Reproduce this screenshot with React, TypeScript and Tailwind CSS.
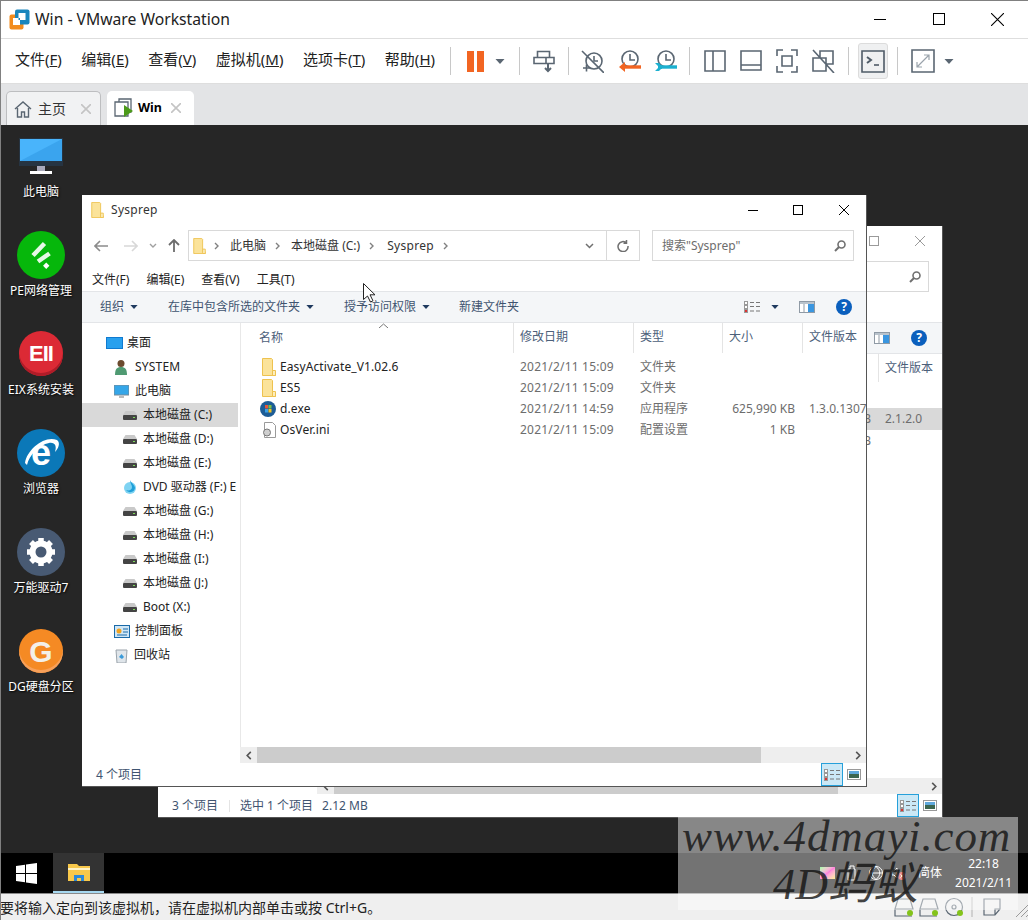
import React from "react";

const uiFont = "font-['Noto_Sans','Noto_Sans_CJK_SC',sans-serif]";

function Folder({ className = "" }: { className?: string }) {
  return (
    <svg viewBox="0 0 14 18" className={className}>
      <path d="M.5.5h9l1 1v14h3v2H.5z" fill="#fbe39a" stroke="#eec24f" />
      <path d="M10.5 12.5h3v5h-3z" fill="#fdeebc" stroke="#eec24f" />
    </svg>
  );
}

function Drive() {
  return (
    <svg viewBox="0 0 14 9" className="h-[9px] w-[14px]">
      <path d="M2.5 0h9L14 4H0z" fill="#c9c9c9" />
      <rect y="4" width="14" height="5" rx="1" fill="#444" />
      <rect x="10" y="6" width="2" height="1" fill="#7ddc5a" />
    </svg>
  );
}

function Caret({ className = "h-[5px] w-[9px]", color = "#1f3a5f" }: { className?: string; color?: string }) {
  return (
    <svg viewBox="0 0 9 5" className={className}>
      <path d="M0 0h9L4.5 5z" fill={color} />
    </svg>
  );
}

function Chevron({ className = "" }: { className?: string }) {
  return (
    <svg viewBox="0 0 5 8" className={`h-[8px] w-[5px] ${className}`} fill="none" stroke="#808080" strokeWidth="1.4">
      <path d="M1 1l3 3-3 3" />
    </svg>
  );
}

function Sep() {
  return <div className="h-[28px] w-px bg-[#c8c8c8]" />;
}

function ToolIcon({ children, w = 36 }: { children: React.ReactNode; w?: number }) {
  return (
    <div className="flex h-[24px] items-center justify-center" style={{ width: w }}>
      <svg viewBox="0 0 24 24" className="h-[24px] w-[24px]" fill="none" stroke="#5a6672" strokeWidth="1.6">
        {children}
      </svg>
    </div>
  );
}

function Menu({ label, k }: { label: string; k: string }) {
  return (
    <span className="whitespace-nowrap">
      {label}(<u>{k}</u>)
    </span>
  );
}

function TitleBar() {
  return (
    <div className="flex h-[38px] items-center bg-white pl-[9px]">
      <svg viewBox="0 0 21 21" className="h-[21px] w-[21px]">
        <rect x="0.5" y="5.5" width="14" height="15" rx="2" fill="#f28c1e" />
        <rect x="6" y="0.5" width="14.5" height="15" rx="2" fill="#1a86bd" />
        <rect x="4" y="9" width="7" height="7" fill="#fff" />
        <rect x="9.5" y="4" width="7" height="7" fill="#fff" />
        <rect x="9.5" y="9" width="1.5" height="2" fill="#1a86bd" />
      </svg>
      <span className="mt-[2px] ml-[5px] text-[15.7px] text-[#222]">Win - VMware Workstation</span>
      <div className="ml-auto flex items-center">
        <div className="h-px w-[12px] bg-black" />
        <div className="ml-[47px] h-[12px] w-[12px] border border-black" />
        <svg viewBox="0 0 12 12" className="ml-[46px] mr-[24px] h-[13px] w-[13px]" stroke="#000" fill="none">
          <path d="M0 0l12 12M12 0L0 12" />
        </svg>
      </div>
    </div>
  );
}

function Toolbar() {
  return (
    <div className="flex h-[46px] items-center border-y border-[#dedede] bg-white pl-[15px]">
      <div className="mb-[3px] flex w-[435px] gap-[19.5px] text-[15px] text-[#222]">
        <Menu label="文件" k="F" />
        <Menu label="编辑" k="E" />
        <Menu label="查看" k="V" />
        <Menu label="虚拟机" k="M" />
        <Menu label="选项卡" k="T" />
        <Menu label="帮助" k="H" />
      </div>
      <Sep />
      <div className="ml-[16px] flex h-[21px] gap-[3px]">
        <div className="w-[7px] bg-[#f26522]" />
        <div className="w-[7px] bg-[#f26522]" />
      </div>
      <Caret className="ml-[11px] h-[5px] w-[10px]" color="#5a6672" />
      <div className="ml-[14px]">
        <Sep />
      </div>
      <ToolIcon w={48}>
        <path d="M5.5 2.5h12v6h-12zM2 8.5h12v6H2zM14 8.5h8v6h-8z" />
        <path d="M16 14.5v7M13 19l3 3 3-3" strokeWidth="2" />
      </ToolIcon>
      <Sep />
      <ToolIcon w={46}>
        <circle cx="14" cy="12" r="8" />
        <path d="M14 7v5h4M3 19h7M6.5 15.5v7" />
        <path d="M2 2l22 22" />
      </ToolIcon>
      <div className="-ml-[4px]">
        <ToolIcon w={36}>
          <circle cx="13" cy="10" r="8" />
          <path d="M13 5v6h5" />
          <path d="M6 18h18" stroke="#f26522" strokeWidth="3.4" />
          <path d="M8 13l-6 5 6 5z" fill="#f26522" stroke="none" />
        </ToolIcon>
      </div>
      <ToolIcon w={36}>
        <circle cx="13" cy="10" r="8" />
        <path d="M13 5v6h5" />
        <path d="M6 18h18" stroke="#1cb0d0" strokeWidth="3.4" />
        <path d="M2 14h4l2 2h1v4H8l-2 2H2l3-3v-2z" fill="#1cb0d0" stroke="none" />
      </ToolIcon>
      <div className="ml-[6px]">
        <Sep />
      </div>
      <div className="ml-[7px] flex">
        <ToolIcon w={36}>
          <path d="M2 2h20v20H2zM10 2v20" />
        </ToolIcon>
        <ToolIcon w={36}>
          <path d="M2 2h20v19H2zM2 16h20" />
        </ToolIcon>
        <ToolIcon w={36}>
          <path d="M2 7V1h6M16 1h6v6M22 17v6h-6M8 23H2v-6M7 7h10v10H7z" />
        </ToolIcon>
        <ToolIcon w={36}>
          <path d="M9 9V2h13v13h-7M2 9h13v13H2zM2 1l21 23" />
        </ToolIcon>
      </div>
      <div className="ml-[7px]">
        <Sep />
      </div>
      <div className="ml-[9px] flex h-[36px] w-[30px] items-center justify-center rounded-[3px] border border-[#dcdcdc] bg-[#eff0f1]">
        <svg viewBox="0 0 24 24" className="h-[24px] w-[24px]" fill="none" stroke="#4f5b67" strokeWidth="1.6">
          <path d="M1 2h22v21H1z" />
          <path d="M6 8l4 3-4 3" strokeWidth="2" />
          <path d="M13 16h5" />
        </svg>
      </div>
      <div className="ml-[9px]">
        <Sep />
      </div>
      <div className="ml-[13px]">
        <svg viewBox="0 0 24 24" className="h-[24px] w-[24px]" fill="none" stroke="#5a6672" strokeWidth="1.6">
          <path d="M1 1h22v22H1z" />
          <path d="M6 18L18 6M13 6h5v5M6 13v5h5" stroke="#9aa3ab" strokeWidth="1.2" />
        </svg>
      </div>
      <Caret className="ml-[9px] h-[5px] w-[10px]" color="#5a6672" />
    </div>
  );
}

function Tabs() {
  return (
    <div className="flex h-[41px] items-end gap-[6px] bg-[#e3e4e6] pl-[6px]">
      <div className="flex h-[34px] w-[95px] items-center rounded-t-[5px] border border-b-0 border-[#bdbec0] bg-[#f1f2f3] pl-[7px]">
        <svg viewBox="0 0 18 18" className="h-[18px] w-[18px]" fill="none" stroke="#5a6672" strokeWidth="1.4">
          <path d="M1 9l8-7 8 7M3.5 8v9h4v-5h3v5h4V8" />
        </svg>
        <span className="ml-[6px] text-[14px] text-[#333]">主页</span>
        <svg viewBox="0 0 10 10" className="ml-[15px] h-[10px] w-[10px]" stroke="#c4c4c4" strokeWidth="1.6">
          <path d="M0 0l10 10M10 0L0 10" />
        </svg>
      </div>
      <div className="flex h-[34px] w-[87px] items-center rounded-t-[5px] bg-white pl-[7px]">
        <svg viewBox="0 0 20 20" className="h-[20px] w-[20px]">
          <path d="M5 3.5V1h12v13h-2M1 4h13v14H1z" fill="none" stroke="#5a6672" strokeWidth="1.3" />
          <path d="M10 7v12l9-6z" fill="#4c9a1a" />
        </svg>
        <span className="ml-[4px] text-[12.5px] font-bold text-black">Win</span>
        <svg viewBox="0 0 10 10" className="ml-[9px] h-[10px] w-[10px]" stroke="#c4c4c4" strokeWidth="1.6">
          <path d="M0 0l10 10M10 0L0 10" />
        </svg>
      </div>
    </div>
  );
}

const desktopItems = [
  {
    label: "此电脑",
    icon: (
      <svg viewBox="0 0 46 40" className="mt-[4px] h-[40px] w-[46px]">
        <rect x="1" y="0" width="44" height="28" fill="#263442" />
        <rect x="2" y="1" width="42" height="22" fill="#49b4fb" />
        <path d="M2 23L44 1v22z" fill="#3aa4ee" />
        <rect x="19" y="28" width="8" height="6" fill="#aab" />
        <rect x="12" y="33" width="22" height="3" fill="#fff" />
      </svg>
    ),
  },
  {
    label: "PE网络管理",
    icon: (
      <svg viewBox="0 0 48 48" className="h-[48px] w-[48px]">
        <circle cx="24" cy="24" r="24" fill="#06b70b" />
        <path d="M16 24.5L27.5 12.5M21 30.5l11.5-8" stroke="#e6f8e6" strokeWidth="4.5" fill="none" />
        <rect x="27" y="32.5" width="4.5" height="4.5" transform="rotate(45 29.3 34.7)" fill="#fff" />
      </svg>
    ),
  },
  {
    label: "EIX系统安装",
    icon: (
      <div className="mb-[2px] flex h-[45px] w-[44px] items-center justify-center rounded-full bg-[#dc2a35] font-['Liberation_Sans',sans-serif] text-[22px] font-bold tracking-[-1px] text-white shadow-[inset_0_-3px_0_#b01c28]">
        EII
      </div>
    ),
  },
  {
    label: "浏览器",
    icon: (
      <svg viewBox="0 0 48 48" className="h-[48px] w-[48px]">
        <circle cx="24" cy="24" r="24" fill="#0b78b8" />
        <text x="24" y="36" textAnchor="middle" fontSize="36" fontWeight="700" fontFamily="Liberation Sans" fill="#fff">e</text>
        <path d="M8 34C10 20 28 6 40 11 44 14 41 20 38 23 40 17 38 13 32 14 22 16 12 26 10 36z" fill="#fff" />
      </svg>
    ),
  },
  {
    label: "万能驱动7",
    icon: (
      <div className="flex h-[48px] w-[48px] items-center justify-center rounded-full bg-[#485a73]">
        <svg viewBox="0 0 32 32" className="h-[32px] w-[32px]">
          <circle cx="16" cy="16" r="8.5" fill="none" stroke="#fff" strokeWidth="6" />
          <path d="M16 2v6M16 24v6M2 16h6M24 16h6M6 6l4 4M22 22l4 4M26 6l-4 4M10 22l-4 4" stroke="#fff" strokeWidth="5.5" />
        </svg>
      </div>
    ),
  },
  {
    label: "DG硬盘分区",
    icon: (
      <div className="flex h-[44px] w-[44px] items-center justify-center rounded-full bg-[#f58a24] font-['Liberation_Sans',sans-serif] text-[30px] font-bold text-[#f3f0ea] shadow-[inset_0_-3px_0_#f7a05a]">
        G
      </div>
    ),
  },
];

function DesktopIcons() {
  return (
    <div className="flex w-[82px] flex-col items-center pt-[7px]">
      {desktopItems.map((d) => (
        <div key={d.label} className="flex h-[99px] w-[82px] flex-col items-center">
          <div className="flex h-[48px] items-center">{d.icon}</div>
          <div className="mt-[3px] text-[12px] whitespace-nowrap text-white [text-shadow:1px_1px_2px_#000]">
            {d.label}
          </div>
        </div>
      ))}
    </div>
  );
}

const treeItems = [
  { t: "本地磁盘 (C:)", sel: true },
  { t: "本地磁盘 (D:)" },
  { t: "本地磁盘 (E:)" },
  { t: "DVD 驱动器 (F:) E", dvd: true },
  { t: "本地磁盘 (G:)" },
  { t: "本地磁盘 (H:)" },
  { t: "本地磁盘 (I:)" },
  { t: "本地磁盘 (J:)" },
  { t: "Boot (X:)" },
];

function NavPane() {
  return (
    <div className="flex w-[158px] flex-col overflow-hidden pt-[8px] text-[12px] text-[#222]">
      <div className="flex h-[24px] items-center pl-[24px]">
        <div className="h-[12px] w-[17px] border border-[#0f7ad0] bg-[#28a0ee]" />
        <span className="ml-[4px]">桌面</span>
      </div>
      <div className="flex h-[24px] items-center pl-[33px]">
        <svg viewBox="0 0 12 16" className="h-[16px] w-[12px]">
          <circle cx="6" cy="4.5" r="3.5" fill="#6b4a2e" />
          <path d="M0 16c0-6 2-8 6-8s6 2 6 8z" fill="#4f9a72" />
        </svg>
        <span className="ml-[8px] tracking-[0.2px]">SYSTEM</span>
      </div>
      <div className="flex h-[24px] items-center pl-[32px]">
        <svg viewBox="0 0 15 13" className="h-[13px] w-[15px]">
          <rect width="15" height="10" fill="#35a6e8" stroke="#7b8a96" />
          <rect x="5" y="11" width="5" height="2" fill="#bbb" />
        </svg>
        <span className="ml-[6px]">此电脑</span>
      </div>
      {treeItems.map((d) => (
        <div
          key={d.t}
          className={`flex h-[24px] w-[156px] items-center pl-[41px] whitespace-nowrap ${d.sel ? "bg-[#d9d9d9]" : ""}`}
        >
          {d.dvd ? (
            <svg viewBox="0 0 14 14" className="h-[14px] w-[14px]">
              <circle cx="7" cy="8" r="6" fill="#7fd3f2" />
              <path d="M7 0c1 3 5 5 5 8a5 5 0 0 1-9 2c3 1 6 0 6-3 0-2-2-4-2-7z" fill="#1f9fd8" />
            </svg>
          ) : (
            <Drive />
          )}
          <span className="ml-[6px]">{d.t}</span>
        </div>
      ))}
      <div className="flex h-[24px] items-center pl-[32px]">
        <svg viewBox="0 0 16 13" className="h-[13px] w-[16px]">
          <rect x="0.5" y="0.5" width="15" height="12" fill="#cfe6f6" stroke="#1a6aa8" />
          <circle cx="5" cy="6" r="2.5" fill="#f2a31f" />
          <path d="M9 4h5M9 7h5M3 10h10" stroke="#1a6aa8" />
        </svg>
        <span className="ml-[5px]">控制面板</span>
      </div>
      <div className="flex h-[24px] items-center pl-[33px]">
        <svg viewBox="0 0 13 15" className="h-[15px] w-[13px]">
          <path d="M1 2h11l-1 13H2z" fill="#dfe5ea" stroke="#9aa3ab" />
          <path d="M4 9l2.5-3L9 9l-2 2z" fill="#3a9ad9" />
        </svg>
        <span className="ml-[6px]">回收站</span>
      </div>
    </div>
  );
}

const files = [
  { name: "EasyActivate_V1.02.6", date: "2021/2/11 15:09", type: "文件夹", size: "", ver: "", icon: "folder" },
  { name: "ES5", date: "2021/2/11 15:09", type: "文件夹", size: "", ver: "", icon: "folder" },
  { name: "d.exe", date: "2021/2/11 14:59", type: "应用程序", size: "625,990 KB", ver: "1.3.0.1307", icon: "exe" },
  { name: "OsVer.ini", date: "2021/2/11 15:09", type: "配置设置", size: "1 KB", ver: "", icon: "ini" },
];

function FileIcon({ kind }: { kind: string }) {
  if (kind === "folder") return <Folder className="h-[18px] w-[14px]" />;
  if (kind === "exe")
    return (
      <svg viewBox="0 0 16 16" className="h-[16px] w-[16px]">
        <circle cx="8" cy="8" r="8" fill="#1d5c96" />
        <rect x="5" y="4" width="3" height="3.5" fill="#e8553a" />
        <rect x="8.5" y="4" width="3" height="3.5" fill="#7cc043" />
        <rect x="5" y="8" width="3" height="3.5" fill="#39a0e6" />
        <rect x="8.5" y="8" width="3" height="3.5" fill="#f4c321" />
      </svg>
    );
  return (
    <svg viewBox="0 0 14 16" className="h-[16px] w-[14px]">
      <path d="M2.5.5h8l3 3v12h-11z" fill="#fff" stroke="#9a9a9a" />
      <circle cx="5" cy="10.5" r="3.5" fill="#cfcfcf" stroke="#777" />
    </svg>
  );
}

const gridCols = "grid-cols-[272px_120px_89px_80px_64px]";

function FilePane() {
  return (
    <div className="flex min-w-0 flex-1 flex-col overflow-hidden border-l border-[#e8e8e8] text-[12px]">
      <div className={`relative grid h-[30px] ${gridCols} items-center text-[#4c607a]`}>
        <div className="pl-[18px]">名称</div>
        <div className="h-full border-l border-[#e4e4e4] pl-[6px] leading-[28px]">修改日期</div>
        <div className="h-full border-l border-[#e4e4e4] pl-[6px] leading-[28px]">类型</div>
        <div className="h-full border-l border-[#e4e4e4] pl-[6px] leading-[28px]">大小</div>
        <div className="h-full border-l border-[#e4e4e4] pl-[6px] leading-[28px] whitespace-nowrap">文件版本</div>
        <svg viewBox="0 0 9 5" className="absolute top-0 left-[138px] h-[5px] w-[9px]" fill="none" stroke="#777">
          <path d="M0 5l4.5-4L9 5" />
        </svg>
      </div>
      <div className="flex-1 pt-[3px]">
        {files.map((f) => (
          <div key={f.name} className={`grid h-[21px] ${gridCols} items-center whitespace-nowrap text-[#6d6d6d]`}>
            <div className="flex items-center text-[#222]">
              <div className="flex w-[39px] justify-end pr-[4px]">
                <FileIcon kind={f.icon} />
              </div>
              <span className="tracking-[0.1px]">{f.name}</span>
            </div>
            <div className="pl-[7px] tracking-[0.2px]">{f.date}</div>
            <div className="pl-[7px]">{f.type}</div>
            <div className="pr-[7px] text-right">{f.size}</div>
            <div className="overflow-hidden pl-[7px]">{f.ver}</div>
          </div>
        ))}
      </div>
    </div>
  );
}

function ScrollBar({ thumb, className = "" }: { thumb: number; className?: string }) {
  return (
    <div className={`flex h-[16px] items-center bg-[#eeeeee] ${className}`}>
      <div className="flex w-[17px] justify-center text-[#555]">
        <svg viewBox="0 0 6 10" className="h-[9px] w-[6px]" fill="none" stroke="#555" strokeWidth="1.8">
          <path d="M5 1L1 5l4 4" />
        </svg>
      </div>
      <div className="h-full bg-[#cccccc]" style={{ width: thumb }} />
      <div className="ml-auto flex w-[17px] justify-center">
        <svg viewBox="0 0 6 10" className="h-[9px] w-[6px]" fill="none" stroke="#555" strokeWidth="1.8">
          <path d="M1 1l4 4-4 4" />
        </svg>
      </div>
    </div>
  );
}

function ViewButtons() {
  return (
    <div className="ml-auto flex h-full items-center pr-[5px]">
      <div className="flex h-full w-[22px] items-center justify-center border border-[#26a0da] bg-[#cbe8f6]">
        <svg viewBox="0 0 17 12" className="h-[12px] w-[17px]">
          <path d="M0 0h4v12H0z" fill="#999" />
          <path d="M1 1h2v2H1zM1 5h2v2H1z" fill="#fff" />
          <path d="M1 9h2v2H1z" fill="#d33" />
          <path d="M6 1.5h4M12 1.5h4M6 5.5h4M12 5.5h4M6 10h4M12 10h4" stroke="#777" />
        </svg>
      </div>
      <svg viewBox="0 0 14 11" className="ml-[4px] h-[11px] w-[14px]">
        <rect x="0.5" y="0.5" width="13" height="10" fill="#fff" stroke="#999" />
        <rect x="2" y="2" width="10" height="3" fill="#5fa8dc" />
        <rect x="2" y="5" width="10" height="4" fill="#3c6650" />
      </svg>
    </div>
  );
}

function FrontWindow() {
  return (
    <div className="absolute top-[70px] left-[82px] flex h-[592px] w-[785px] flex-col border-r border-b border-[#555] bg-white">
      {/* title */}
      <div className="flex h-[35px] items-center pb-[5px] pl-[9px]">
        <Folder className="h-[16px] w-[13px]" />
        <span className="ml-[7px] text-[12px] tracking-[0.3px] text-[#333]">Sysprep</span>
        <div className="ml-auto flex items-center pr-[17px]">
          <div className="h-px w-[10px] bg-black" />
          <div className="ml-[35px] h-[10px] w-[10px] border border-black" />
          <svg viewBox="0 0 10 10" className="ml-[36px] h-[10px] w-[10px]" stroke="#000" fill="none">
            <path d="M0 0l10 10M10 0L0 10" />
          </svg>
        </div>
      </div>
      {/* nav row */}
      <div className="flex h-[31px] items-center pl-[12px] text-[12px]">
        <svg viewBox="0 0 14 12" className="h-[12px] w-[14px]" fill="none" stroke="#8c8c8c" strokeWidth="1.6">
          <path d="M14 6H1M6 1L1 6l5 5" />
        </svg>
        <svg viewBox="0 0 14 12" className="ml-[16px] h-[12px] w-[14px]" fill="none" stroke="#d8d8d8" strokeWidth="1.6">
          <path d="M0 6h13M8 1l5 5-5 5" />
        </svg>
        <svg viewBox="0 0 8 5" className="ml-[11px] h-[5px] w-[8px]" fill="none" stroke="#a0a0a0" strokeWidth="1.4">
          <path d="M1 1l3 3 3-3" />
        </svg>
        <svg viewBox="0 0 12 13" className="ml-[11px] h-[13px] w-[12px]" fill="none" stroke="#6d6d6d" strokeWidth="1.8">
          <path d="M6 13V1M1 6l5-5 5 5" />
        </svg>
        <div className="ml-[8px] flex h-[31px] w-[452px] items-center border border-[#d9d9d9] pl-[4px] text-[#333]">
          <Folder className="h-[16px] w-[13px]" />
          <Chevron className="ml-[8px]" />
          <span className="ml-[11px]">此电脑</span>
          <Chevron className="ml-[9px]" />
          <span className="ml-[11px]">本地磁盘 (C:)</span>
          <Chevron className="ml-[9px]" />
          <span className="ml-[13px] tracking-[0.3px]">Sysprep</span>
          <Chevron className="ml-[9px]" />
          <div className="ml-auto flex h-full items-center">
            <svg viewBox="0 0 9 6" className="mr-[12px] h-[6px] w-[9px]" fill="none" stroke="#707070" strokeWidth="1.5">
              <path d="M1 1l3.5 3.5L8 1" />
            </svg>
            <div className="flex h-full w-[33px] items-center justify-center border-l border-[#d9d9d9]">
              <svg viewBox="0 0 12 12" className="h-[12px] w-[12px]" fill="none" stroke="#707070" strokeWidth="1.5">
                <path d="M9.5 3a5 5 0 1 0 1.5 3M9.5 0v3.2H6.5" />
              </svg>
            </div>
          </div>
        </div>
        <div className="ml-[12px] flex h-[31px] w-[202px] items-center border border-[#d9d9d9] pl-[9px] text-[#6d6d6d]">
          搜索"Sysprep"
          <svg viewBox="0 0 12 12" className="mr-[7px] ml-auto h-[12px] w-[12px]" fill="none" stroke="#707070" strokeWidth="1.6">
            <circle cx="7.5" cy="4.5" r="3.5" />
            <path d="M5 7l-4 4" strokeWidth="2" />
          </svg>
        </div>
      </div>
      {/* menu */}
      <div className="flex h-[30px] items-center gap-[17px] pt-[7px] pl-[10px] text-[12px] text-[#222]">
        <span>文件(F)</span>
        <span>编辑(E)</span>
        <span>查看(V)</span>
        <span>工具(T)</span>
      </div>
      {/* commands */}
      <div className="flex h-[32px] items-center border-y border-[#e3e5e8] bg-[#f4f6f8] pl-[18px] text-[12px] text-[#3f5470]">
        <span>组织</span>
        <Caret className="ml-[6px] h-[4px] w-[8px]" />
        <span className="ml-[30px]">在库中包含所选的文件夹</span>
        <Caret className="ml-[6px] h-[4px] w-[8px]" />
        <span className="ml-[30px]">授予访问权限</span>
        <Caret className="ml-[6px] h-[4px] w-[8px]" />
        <span className="ml-[29px]">新建文件夹</span>
        <svg viewBox="0 0 17 12" className="ml-[225px] h-[12px] w-[17px]">
          <path d="M0 0h4v12H0z" fill="#999" />
          <path d="M1 1h2v2H1zM1 5h2v2H1z" fill="#fff" />
          <path d="M1 9h2v2H1z" fill="#d33" />
          <path d="M6 1.5h4M12 1.5h4M6 5.5h4M12 5.5h4M6 10h4M12 10h4" stroke="#777" />
        </svg>
        <Caret className="ml-[10px] h-[4px] w-[8px]" />
        <svg viewBox="0 0 16 12" className="ml-[20px] h-[12px] w-[16px]">
          <rect x="0.5" y="0.5" width="15" height="11" fill="#fff" stroke="#8f9aa5" />
          <rect x="1" y="1" width="14" height="2" fill="#b9c3cc" />
          <rect x="9" y="3" width="6" height="8" fill="#3a96e0" />
          <path d="M5 3v8" stroke="#8f9aa5" />
        </svg>
        <div className="ml-[21px] flex h-[16px] w-[16px] items-center justify-center rounded-full bg-[#0a5fbd] text-[12px] font-bold text-white">
          ?
        </div>
      </div>
      <div className="flex min-h-0 flex-1">
        <NavPane />
        <div className="flex min-w-0 flex-1 flex-col">
          <FilePane />
          <ScrollBar thumb={504} />
        </div>
      </div>
      {/* status */}
      <div className="flex h-[23px] items-center pl-[14px] text-[12px] text-[#3f5470]">
        <span>4 个项目</span>
        <ViewButtons />
      </div>
    </div>
  );
}

function BackRow({ text, ver, sel }: { text: string; ver?: string; sel?: boolean }) {
  return (
    <div className={`flex h-[22px] items-center text-[12px] whitespace-nowrap text-[#6d6d6d] ${sel ? "bg-[#d9d9d9]" : ""}`}>
      <div className="w-[713px] text-right">{text}</div>
      {ver && <div className="ml-[14px]">{ver}</div>}
    </div>
  );
}

function BackWindow() {
  return (
    <div className="absolute top-[101px] left-[158px] flex h-[592px] w-[785px] flex-col items-stretch border-r border-b border-[#555] bg-white">
      <div className="flex h-[35px] items-center justify-end pr-[17px] pb-[5px]">
        <div className="h-[10px] w-[10px] border border-[#9a9a9a]" />
        <svg viewBox="0 0 10 10" className="ml-[36px] h-[10px] w-[10px]" stroke="#9a9a9a" fill="none">
          <path d="M0 0l10 10M10 0L0 10" />
        </svg>
      </div>
      <div className="flex h-[31px] justify-end pr-[13px]">
        <div className="flex h-[31px] w-[202px] items-center justify-end border border-[#d9d9d9] pr-[7px]">
          <svg viewBox="0 0 12 12" className="h-[12px] w-[12px]" fill="none" stroke="#707070" strokeWidth="1.6">
            <circle cx="7.5" cy="4.5" r="3.5" />
            <path d="M5 7l-4 4" strokeWidth="2" />
          </svg>
        </div>
      </div>
      <div className="h-[30px]" />
      <div className="flex h-[32px] items-center justify-end border-y border-[#e3e5e8] bg-[#f4f6f8] pr-[15px]">
        <svg viewBox="0 0 16 12" className="h-[12px] w-[16px]">
          <rect x="0.5" y="0.5" width="15" height="11" fill="#fff" stroke="#8f9aa5" />
          <rect x="1" y="1" width="14" height="2" fill="#b9c3cc" />
          <rect x="9" y="3" width="6" height="8" fill="#3a96e0" />
          <path d="M5 3v8" stroke="#8f9aa5" />
        </svg>
        <div className="ml-[21px] flex h-[16px] w-[16px] items-center justify-center rounded-full bg-[#0a5fbd] text-[12px] font-bold text-white">
          ?
        </div>
      </div>
      <div className="flex h-[28px] items-center justify-end text-[12px] text-[#4c607a]">
        <div className="h-full w-[64px] border-l border-[#e4e4e4] pl-[6px] leading-[28px] whitespace-nowrap">文件版本</div>
      </div>
      <div className="mt-[26px]">
        <BackRow text="B" ver="2.1.2.0" sel />
        <BackRow text="B" />
      </div>
      <div className="flex-1" />
      <ScrollBar thumb={504} className="ml-[159px]" />
      <div className="flex h-[23px] items-center pl-[14px] text-[12px] text-[#3f5470]">
        <span>3 个项目</span>
        <div className="ml-[11px] h-[12px] w-px bg-[#e4e4e4]" />
        <span className="ml-[10px]">选中 1 个项目</span>
        <span className="ml-[9px]">2.12 MB</span>
        <ViewButtons />
      </div>
    </div>
  );
}

function Taskbar() {
  return (
    <div className="flex h-[40px] items-stretch bg-black">
      <div className="flex w-[53px] items-center justify-center">
        <svg viewBox="0 0 21 21" className="h-[21px] w-[21px]" fill="#fff">
          <path d="M0 3l9-1.3V10H0zM10 1.5L21 0v10H10zM0 11h9v8.3L0 18zM10 11h11v10l-11-1.5z" />
        </svg>
      </div>
      <div className="flex w-[51px] items-center justify-center border-b-2 border-[#a6d8f0] bg-[#333]">
        <svg viewBox="0 0 22 18" className="h-[18px] w-[22px]">
          <path d="M0 1h9l2 2h11v15H0z" fill="#f8c84a" />
          <rect x="0" y="5" width="22" height="2" fill="#fff2c4" />
          <path d="M6 18v-6h10v6h-3v-3h-4v3z" fill="#2b88d8" />
        </svg>
      </div>
      <div className="ml-auto flex items-center pr-[16px] text-white">
        <div className="h-[12px] w-[15px] bg-gradient-to-br from-[#00ff60] via-[#ff00c0] to-[#ffe000]" />
        <svg viewBox="0 0 62 16" className="ml-[11px] h-[16px] w-[62px]" fill="none" stroke="#fff" strokeWidth="1">
          <path d="M4 1h4v3h1v11H2V4h2z" />
          <circle cx="30" cy="8" r="6.5" />
          <path d="M23.5 8h13M30 1.5c-5 4-5 9 0 13M30 1.5c5 4 5 9 0 13" />
          <path d="M46 6h2l3-3v10l-3-3h-2z" />
          <circle cx="56" cy="11" r="4" fill="#d9363e" stroke="none" />
          <path d="M54.5 9.5l3 3M57.5 9.5l-3 3" />
        </svg>
        <span className="ml-[10px] text-[12px]">简体</span>
        <div className="ml-[13px] flex flex-col items-center text-[12px] leading-[19px]">
          <span>22:18</span>
          <span>2021/2/11</span>
        </div>
      </div>
    </div>
  );
}

function StatusBar() {
  return (
    <div className="flex h-[27px] items-center border-t border-[#8a8a8a] bg-[#efefef] text-[14px] whitespace-nowrap text-[#222]">
      <span>要将输入定向到该虚拟机，请在虚拟机内部单击或按 Ctrl+G。</span>
      <div className="ml-auto flex items-center">
        <svg viewBox="0 0 90 20" className="h-[20px] w-[90px]" fill="none" stroke="#5a6672" strokeWidth="1.2">
          <path d="M4 2h12l3 10H1zM1 12v7h17" />
          <circle cx="16" cy="16" r="3" fill="#84c31a" stroke="none" />
          <path d="M29 2h12l3 10H26zM26 12v7h17" />
          <circle cx="41" cy="16" r="3" fill="#84c31a" stroke="none" />
          <circle cx="60" cy="10" r="8.5" />
          <circle cx="60" cy="10" r="2" />
          <circle cx="66" cy="16" r="3" fill="#84c31a" stroke="none" />
          <path d="M78 0v20" stroke="#bbb" />
        </svg>
        <svg viewBox="0 0 18 18" className="-ml-[1px] h-[18px] w-[18px]" fill="none" stroke="#5a6672" strokeWidth="1.2">
          <path d="M1 1h16v10l-5 6H1zM12 17v-6h5" />
        </svg>
        <svg viewBox="0 0 14 14" className="ml-[13px] h-[14px] w-[14px] self-end" stroke="#9a9a9a">
          <path d="M14 2L2 14M14 7l-7 7M14 12l-2 2" />
        </svg>
      </div>
    </div>
  );
}

function Watermark() {
  return (
    <div className="absolute top-[817px] left-[678px] h-[93px] w-[340px] bg-white/45 font-['Liberation_Serif','Noto_Sans_CJK_SC',serif] text-[#111]/80 italic">
      <div className="mt-[-3px] pl-[4px] text-[45px] leading-[44px] tracking-[0.9px] whitespace-nowrap">
        www.4dmayi.com
      </div>
      <div className="mt-[3px] pl-[95px] text-[45px] leading-[46px] whitespace-nowrap">4D蚂蚁</div>
    </div>
  );
}

export default function App() {
  return (
    <div className={`relative h-[920px] w-[1028px] overflow-hidden ${uiFont}`}>
      <TitleBar />
      <Toolbar />
      <Tabs />
      <div className="relative flex h-[728px] bg-[#262626]">
        <BackWindow />
        <FrontWindow />
        <DesktopIcons />
      </div>
      <Taskbar />
      <StatusBar />
      {/* window edge */}
      <div className="pointer-events-none absolute inset-0 border-t border-l border-[#808080]" />
      {/* cursor */}
      <svg viewBox="0 0 12 20" className="absolute top-[283px] left-[363px] h-[20px] w-[12px]">
        <path d="M.5.5v16l4-3.5 3 6 2.5-1.2-3-6h5z" fill="#fff" stroke="#222" />
      </svg>
      <Watermark />
    </div>
  );
}
